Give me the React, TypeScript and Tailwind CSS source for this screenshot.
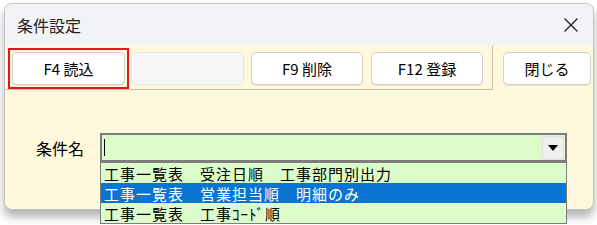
import React from 'react';

const font = { fontFamily: '"Noto Sans CJK JP", "Noto Sans", sans-serif' };

type BtnProps = { label?: string; width: string; blank?: boolean; className?: string };

function ToolButton({ label, width, blank, className = '' }: BtnProps) {
    return (
        <div
            className={`${width} h-[33px] shrink-0 flex items-center justify-center rounded-[5px] border text-[15px] leading-none text-black ${
                blank ? 'bg-[#f7f7f7] border-[#e6e6e6]' : 'bg-white border-[#d0d0d0] shadow-[0_1px_0_rgba(0,0,0,0.08)]'
            } ${className}`}
        >
            {label}
        </div>
    );
}

const options = [
    '工事一覧表　受注日順　工事部門別出力',
    '工事一覧表　営業担当順　明細のみ',
    '工事一覧表　工事ｺｰﾄﾞ順',
];

export default function App() {
    return (
        <div className="w-[597px] h-[225px] bg-white overflow-hidden pt-[3px] pl-[4px]" style={font}>
            <div className="relative w-[590px] h-[207px] flex flex-col rounded-[8px] border border-[#c4c4c4] bg-[#fff8dc] shadow-[0_7px_10px_rgba(0,0,0,0.3)]">
                {/* title bar */}
                <div className="h-[42px] shrink-0 flex items-center justify-between bg-[#f2f3f6] rounded-t-[8px] pl-[12px] pr-[12px]">
                    <span className="text-[16px] text-[#222] leading-none">条件設定</span>
                    <svg width="16" height="16" viewBox="0 0 16 16" className="mr-[2px]">
                        <path d="M1.5 1.5 L14.5 14.5 M14.5 1.5 L1.5 14.5" stroke="#222" strokeWidth="1.3" fill="none" />
                    </svg>
                </div>

                {/* toolbar */}
                <div className="flex items-start h-[44px]">
                    <div className="w-[488px] h-[44px] flex items-start pt-[6px] pl-[7px] border-r border-b border-[#c8c2a8]">
                        <div className="relative">
                            <ToolButton label="F4 読込" width="w-[113px]" />
                            <div className="absolute -inset-[4px] border-2 border-[#e8141c] pointer-events-none" />
                        </div>
                        <ToolButton blank width="w-[113px]" className="ml-[6px]" />
                        <ToolButton label="F9 削除" width="w-[112px]" className="ml-[7px]" />
                        <ToolButton label="F12 登録" width="w-[112px]" className="ml-[8px]" />
                    </div>
                    <div className="pt-[6px] pl-[10px]">
                        <ToolButton label="閉じる" width="w-[88px]" />
                    </div>
                </div>

                {/* condition name */}
                <div className="flex items-center mt-[43px] pl-[31px]">
                    <span className="w-[64px] text-[16px] text-black leading-none">条件名</span>
                    <div className="relative">
                        <div className="w-[467px] h-[29px] flex items-center justify-between bg-[#ddfccb] border-2 border-[#7d7d7d] pl-[2px] pr-[1px]">
                            <span className="w-px h-[17px] bg-black" />
                            <div className="w-[22px] h-[24px] flex items-center justify-center bg-[#f0f0f0] border border-[#e0e0e0]">
                                <svg width="10" height="6" viewBox="0 0 10 6">
                                    <path d="M0 0 L10 0 L5 6 Z" fill="#000" />
                                </svg>
                            </div>
                        </div>
                        <div className="absolute left-0 top-[29px] w-[467px] bg-[#ddfccb] border border-[#7d7d7d] z-10">
                            {options.map((o, i) => (
                                <div
                                    key={o}
                                    className={`h-[20px] flex items-center pl-[3px] text-[15px] leading-none tracking-[1px] whitespace-nowrap ${
                                        i === 1 ? 'bg-[#0a74d4] text-white' : 'text-black'
                                    }`}
                                >
                                    {o}
                                </div>
                            ))}
                        </div>
                    </div>
                </div>
            </div>
        </div>
    );
}
